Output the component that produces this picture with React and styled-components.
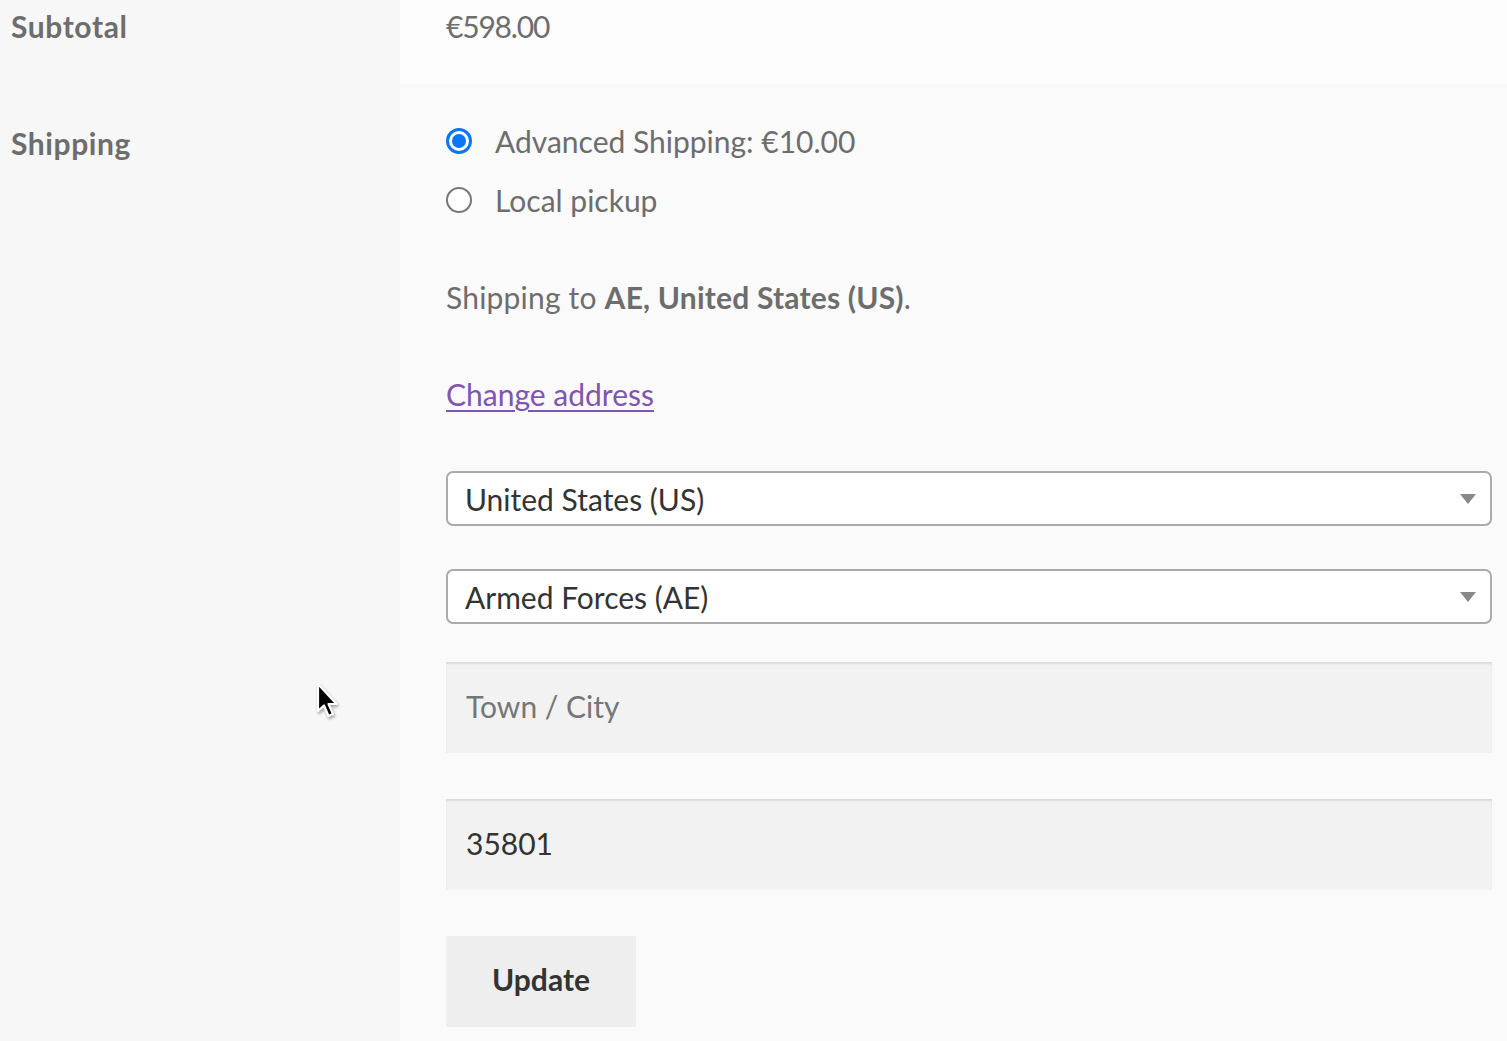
import React from "react";
import styled, { createGlobalStyle } from "styled-components";

const GlobalStyle = createGlobalStyle`
  html, body {
    margin: 0;
    padding: 0;
    background: #fafafa;
  }
  body {
    font-family: Lato, "Open Sans", sans-serif;
    color: #6d6d6d;
    -webkit-font-smoothing: antialiased;
  }
`;

const Page = styled.div`
  position: relative;
  width: 1507px;
  height: 1041px;
  overflow: hidden;
`;

const Table = styled.div`
  display: grid;
  grid-template-columns: 400px 1fr;
  grid-template-rows: 84px auto;
  min-height: 1041px;
`;

const Th = styled.div`
  background: #f7f7f7;
  padding: ${(p) => p.$top}px 0 0 11px;
  font-size: 30px;
  font-weight: 700;
  line-height: 52px;
  letter-spacing: 0.6px;
`;

const Td = styled.div`
  background: ${(p) => p.$bg};
  padding: ${(p) => p.$top}px 15px 0 46px;
  font-size: 30px;
  line-height: 52px;
`;

const Price = styled.span`
  letter-spacing: -1.2px;
`;

const RadioList = styled.ul`
  list-style: none;
  margin: 0;
  padding: 0;
`;

const RadioItem = styled.li`
  display: flex;
  align-items: center;
  gap: 23px;
  height: 59px;
`;

const Radio = styled.span`
  box-sizing: border-box;
  width: 26px;
  height: 26px;
  border-radius: 50%;
  background: #fff;
  border: ${(p) => (p.$checked ? "3px solid #0a76f6" : "2px solid #767676")};
  display: flex;
  align-items: center;
  justify-content: center;

  &::after {
    content: "";
    display: ${(p) => (p.$checked ? "block" : "none")};
    width: 14px;
    height: 14px;
    border-radius: 50%;
    background: #0a76f6;
  }
`;

const Destination = styled.p`
  margin: 42px 0 0;
  letter-spacing: 0.2px;

  strong {
    font-weight: 700;
  }
`;

const ChangeLink = styled.a`
  display: block;
  margin-top: 45px;
  color: #7f54b3;
  text-decoration: underline;
  text-underline-offset: 4px;
  text-decoration-thickness: 2px;
`;

const Form = styled.div`
  display: flex;
  flex-direction: column;
  margin-top: 51px;
`;

const Select = styled.div`
  box-sizing: border-box;
  height: 55px;
  margin-bottom: ${(p) => p.$mb}px;
  background: #fff;
  border: 2px solid #aaa;
  border-radius: 7px;
  display: flex;
  align-items: center;
  justify-content: space-between;
  padding: 0 14px 0 17px;
  color: #333;
  font-size: 30px;
`;

const Arrow = styled.span`
  width: 0;
  height: 0;
  border-left: 8px solid transparent;
  border-right: 8px solid transparent;
  border-top: 10px solid #888;
`;

const Field = styled.div`
  box-sizing: border-box;
  height: 91px;
  margin-bottom: ${(p) => p.$mb}px;
  background: #f2f2f2;
  box-shadow: inset 0 2px 2px rgba(0, 0, 0, 0.1);
  display: flex;
  align-items: center;
  padding: 0 20px 3px;
  font-size: 30px;
  color: ${(p) => (p.$placeholder ? "#767676" : "#333")};
`;

const Button = styled.button`
  align-self: flex-start;
  width: 190px;
  height: 91px;
  padding: 0 0 5px;
  border: none;
  background: #eee;
  color: #333;
  font-family: inherit;
  font-size: 30px;
  font-weight: 700;
  cursor: pointer;
`;

const Cursor = styled.svg`
  position: absolute;
  left: 313px;
  top: 681px;
  filter: drop-shadow(1px 2px 1.5px rgba(0, 0, 0, 0.35));
`;

const App = () => {
  return (
    <Page>
      <GlobalStyle />
      <Table>
        <Th $top={0}>Subtotal</Th>
        <Td $top={0} $bg="#fdfdfd">
          <Price>€598.00</Price>
        </Td>
        <Th $top={33}>Shipping</Th>
        <Td $top={27} $bg="#fafafa">
          <RadioList>
            <RadioItem>
              <Radio $checked />
              <span>Advanced Shipping: €10.00</span>
            </RadioItem>
            <RadioItem>
              <Radio />
              <span>Local pickup</span>
            </RadioItem>
          </RadioList>
          <Destination>
            Shipping to <strong>AE, United States (US)</strong>.
          </Destination>
          <ChangeLink href="#">Change address</ChangeLink>
          <Form>
            <Select $mb={43}>
              <span>United States (US)</span>
              <Arrow />
            </Select>
            <Select $mb={38}>
              <span>Armed Forces (AE)</span>
              <Arrow />
            </Select>
            <Field $mb={46} $placeholder>
              Town / City
            </Field>
            <Field $mb={46}>35801</Field>
            <Button>Update</Button>
          </Form>
        </Td>
      </Table>
      <Cursor width="30" height="42" viewBox="0 0 30 42">
        <path
          d="M5 3 L5 30 L11 24.5 L15.5 35 L20 33 L15.5 23 L23.5 23 Z"
          fill="#000"
          stroke="#fff"
          strokeWidth="2.2"
          strokeLinejoin="round"
        />
      </Cursor>
    </Page>
  );
};

export default App;
